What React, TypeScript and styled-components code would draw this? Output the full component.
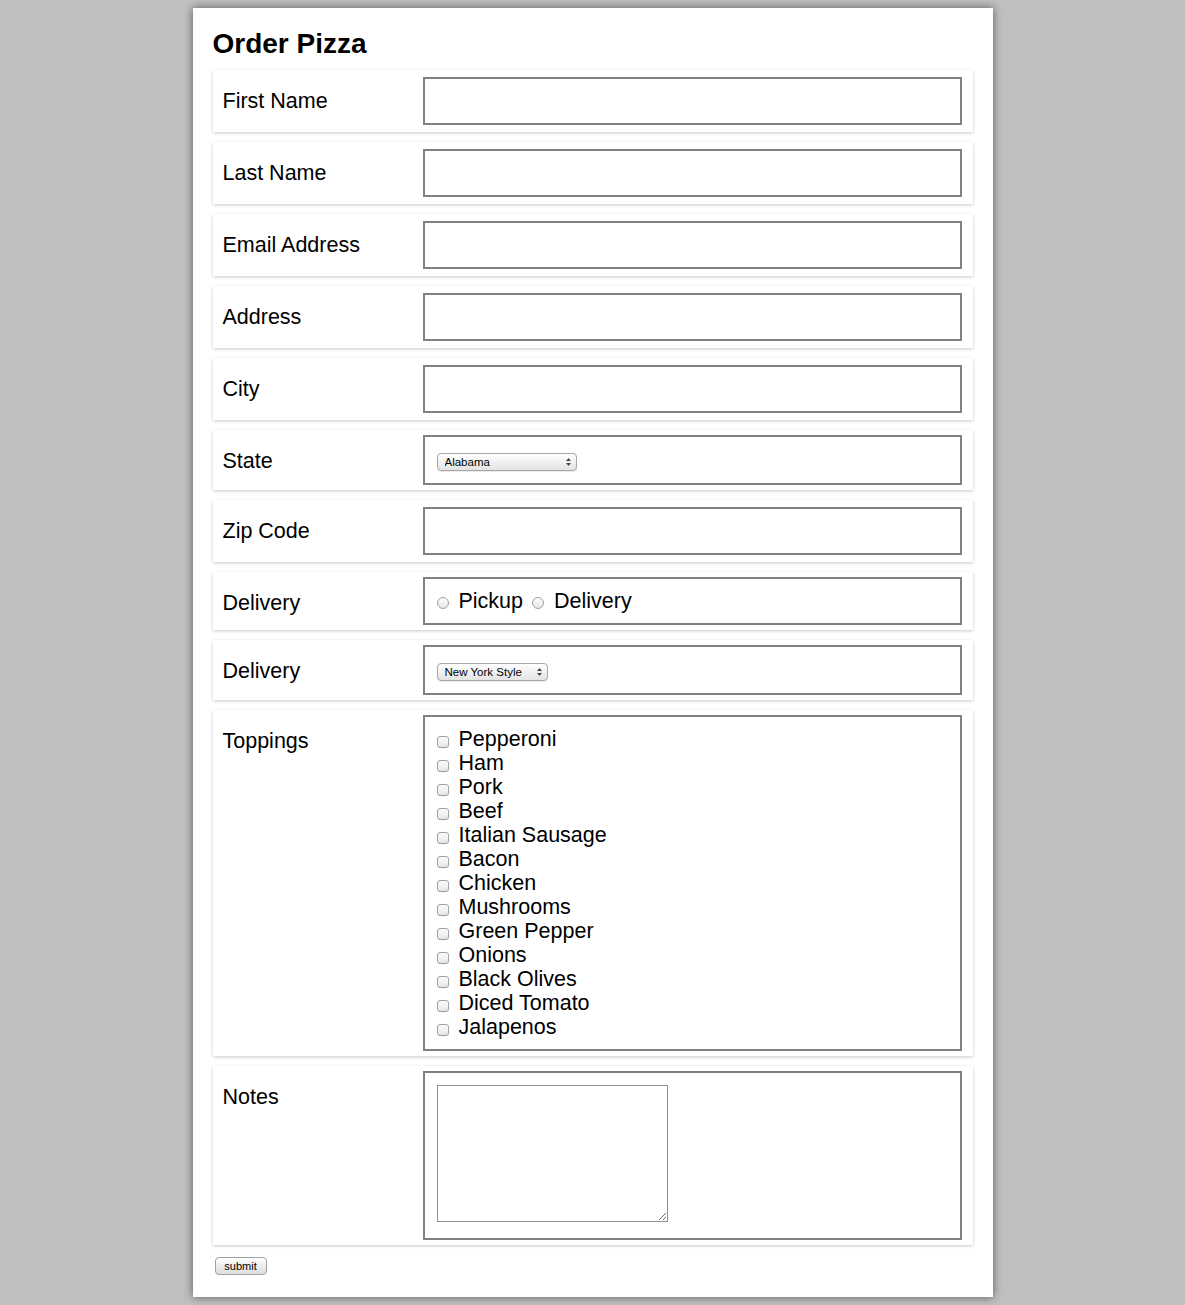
import { createGlobalStyle, styled } from "styled-components";

const toppings = [
  "Pepperoni",
  "Ham",
  "Pork",
  "Beef",
  "Italian Sausage",
  "Bacon",
  "Chicken",
  "Mushrooms",
  "Green Pepper",
  "Onions",
  "Black Olives",
  "Diced Tomato",
  "Jalapenos",
];

const textFields = ["First Name", "Last Name", "Email Address", "Address", "City"];

export default function App() {
  return (
    <>
      <GlobalStyle />
      <Page>
        <Title>Order Pizza</Title>
        <Form onSubmit={(e) => e.preventDefault()}>
          {textFields.map((label) => (
            <Row key={label}>
              <Label>{label}</Label>
              <TextInput type="text" />
            </Row>
          ))}
          <Row>
            <Label>State</Label>
            <FieldBox $pad="16px 12px 12px">
              <SelectWrap $width={140}>
                <Select defaultValue="Alabama">
                  <option>Alabama</option>
                  <option>Alaska</option>
                  <option>Arizona</option>
                </Select>
                <Arrows />
              </SelectWrap>
            </FieldBox>
          </Row>
          <Row>
            <Label>Zip Code</Label>
            <TextInput type="text" />
          </Row>
          <Row>
            <Label>Delivery</Label>
            <FieldBox $pad="10px 12px">
              <Choice>
                <Radio type="radio" name="delivery" />
                Pickup
              </Choice>
              <Choice>
                <Radio type="radio" name="delivery" />
                Delivery
              </Choice>
            </FieldBox>
          </Row>
          <Row>
            <Label>Delivery</Label>
            <FieldBox $pad="16px 12px 12px">
              <SelectWrap $width={111}>
                <Select defaultValue="New York Style">
                  <option>New York Style</option>
                  <option>Chicago Style</option>
                </Select>
                <Arrows />
              </SelectWrap>
            </FieldBox>
          </Row>
          <Row>
            <Label>Toppings</Label>
            <FieldBox $pad="10px 12px" $column>
              {toppings.map((t) => (
                <Choice key={t}>
                  <Check type="checkbox" />
                  {t}
                </Choice>
              ))}
            </FieldBox>
          </Row>
          <Row>
            <Label>Notes</Label>
            <FieldBox $pad="12px 12px 16px">
              <Notes />
            </FieldBox>
          </Row>
          <Submit type="submit">submit</Submit>
        </Form>
      </Page>
    </>
  );
}

function Arrows() {
  return (
    <ArrowIcon width="5" height="8" viewBox="0 0 5 8">
      <path d="M0 3 L2.5 0 L5 3 Z" fill="#444" />
      <path d="M0 5 L2.5 8 L5 5 Z" fill="#444" />
    </ArrowIcon>
  );
}

const GlobalStyle = createGlobalStyle`
  html, body {
    background: #c0c0c0;
  }
  body {
    margin: 0;
    padding: 8px 0;
    font-family: "Liberation Sans", Arial, sans-serif;
    color: #000;
  }
`;

const Page = styled.div`
  width: 800px;
  box-sizing: border-box;
  margin: 0 auto;
  background: #fff;
  padding: 20px 20px 22px;
  box-shadow: 0 0 9px rgba(0, 0, 0, 0.55);
`;

const Title = styled.h1`
  margin: 0 0 10px;
  font-size: 28px;
  line-height: 32px;
  font-weight: bold;
`;

const Form = styled.form`
  display: flex;
  flex-direction: column;
  gap: 10px;
`;

const Row = styled.div`
  display: flex;
  align-items: flex-start;
  padding: 5px 11px 5px 10px;
  background: #fff;
  box-shadow: 0 1px 3px rgba(0, 0, 0, 0.22);
`;

const Label = styled.div`
  flex: none;
  width: 200px;
  margin-top: 14px;
  font-size: 21.5px;
  line-height: 24px;
`;

const TextInput = styled.input`
  flex: 1;
  height: 48px;
  margin: 2px 0;
  box-sizing: border-box;
  border: 2px solid #808080;
  padding: 0 8px;
  font: 21px "Liberation Sans", Arial, sans-serif;
  outline: none;
`;

const FieldBox = styled.div<{ $pad: string; $column?: boolean }>`
  flex: 1;
  display: flex;
  flex-direction: ${(p) => (p.$column ? "column" : "row")};
  align-items: flex-start;
  border: 2px solid #808080;
  padding: ${(p) => p.$pad};
  font-size: 21.5px;
  line-height: 24px;
`;

const SelectWrap = styled.div<{ $width: number }>`
  position: relative;
  width: ${(p) => p.$width}px;
  height: 18px;
  line-height: 0;
`;

const Select = styled.select`
  display: block;
  appearance: none;
  width: 100%;
  height: 18px;
  margin: 0;
  box-sizing: border-box;
  border: 1px solid #a6a6a6;
  border-radius: 4px;
  padding: 0 14px 0 7px;
  background: linear-gradient(#ffffff, #f1f1f1 50%, #e4e4e4);
  box-shadow: 0 1px 0 rgba(0, 0, 0, 0.08);
  font: 11.5px "Liberation Sans", Arial, sans-serif;
  line-height: 16px;
  color: #000;
  outline: none;
`;

const ArrowIcon = styled.svg`
  position: absolute;
  right: 6px;
  top: 5px;
  pointer-events: none;
`;

const Choice = styled.label`
  display: inline-flex;
  align-items: center;
  margin-right: 9px;
  white-space: nowrap;
`;

const Radio = styled.input`
  appearance: none;
  width: 12px;
  height: 12px;
  margin: 4px 10px 0 0;
  border: 1px solid #a0a0a0;
  border-radius: 50%;
  background: linear-gradient(#fdfdfd, #e6e6e6);
  box-sizing: border-box;
`;

const Check = styled.input`
  appearance: none;
  width: 12px;
  height: 12px;
  margin: 5px 10px 0 0;
  border: 1px solid #a0a0a0;
  border-radius: 3px;
  background: linear-gradient(#fdfdfd, #e6e6e6);
  box-sizing: border-box;
`;

const Notes = styled.textarea`
  width: 231px;
  height: 137px;
  box-sizing: border-box;
  border: 1px solid #8f8f8f;
  margin: 0;
  font: 13px "Liberation Sans", Arial, sans-serif;
  outline: none;
`;

const Submit = styled.button`
  align-self: flex-start;
  margin: 2px 0 0 2px;
  width: 52px;
  height: 18px;
  padding: 0;
  border: 1px solid #a0a0a0;
  border-radius: 4px;
  background: linear-gradient(#ffffff, #ececec 50%, #dedede);
  font: 11px "Liberation Sans", Arial, sans-serif;
  color: #000;
`;
